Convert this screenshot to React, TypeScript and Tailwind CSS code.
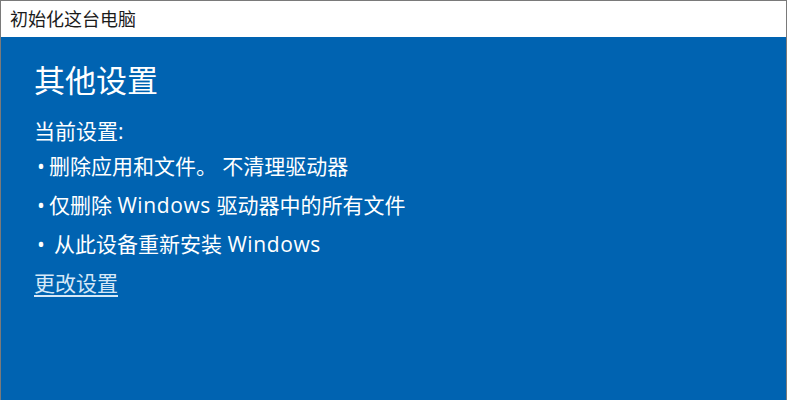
import React from "react";

const font = { fontFamily: '"Open Sans", "Noto Sans CJK SC", sans-serif' };

function Bullet({ children, wide }: { children: React.ReactNode; wide?: boolean }) {
  return (
    <p className="flex leading-[30px]">
      <span className={wide ? "pl-[3px] pr-[9px]" : "pl-[3px] pr-[4px]"}>•</span>
      <span>{children}</span>
    </p>
  );
}

function App() {
  return (
    <div
      className="flex h-[400px] w-[787px] flex-col border-t border-l border-r border-[#7a7a7a] bg-[#0063b1]"
      style={font}
    >
      <div className="flex h-[36px] items-center bg-white pl-[9px] text-[18px] text-[#1b1b1b]">
        初始化这台电脑
      </div>
      <div className="flex flex-1 flex-col pl-[33px] pt-[21px] text-white">
        <h1 className="text-[31px] leading-[44px]">其他设置</h1>
        <div className="mt-[14px] flex flex-col gap-[9px] text-[21px]">
          <p className="mb-[-4px] leading-[30px]">当前设置:</p>
          <Bullet>删除应用和文件。 不清理驱动器</Bullet>
          <Bullet>仅删除 <span className="tracking-[0.6px]">Windows</span> 驱动器中的所有文件</Bullet>
          <Bullet wide>从此设备重新安装 <span className="tracking-[0.6px]">Windows</span></Bullet>
          <a className="mt-[0px] w-fit leading-[30px] text-[#d6e8f7] underline underline-offset-4">
            更改设置
          </a>
        </div>
      </div>
    </div>
  );
}

export default App;
